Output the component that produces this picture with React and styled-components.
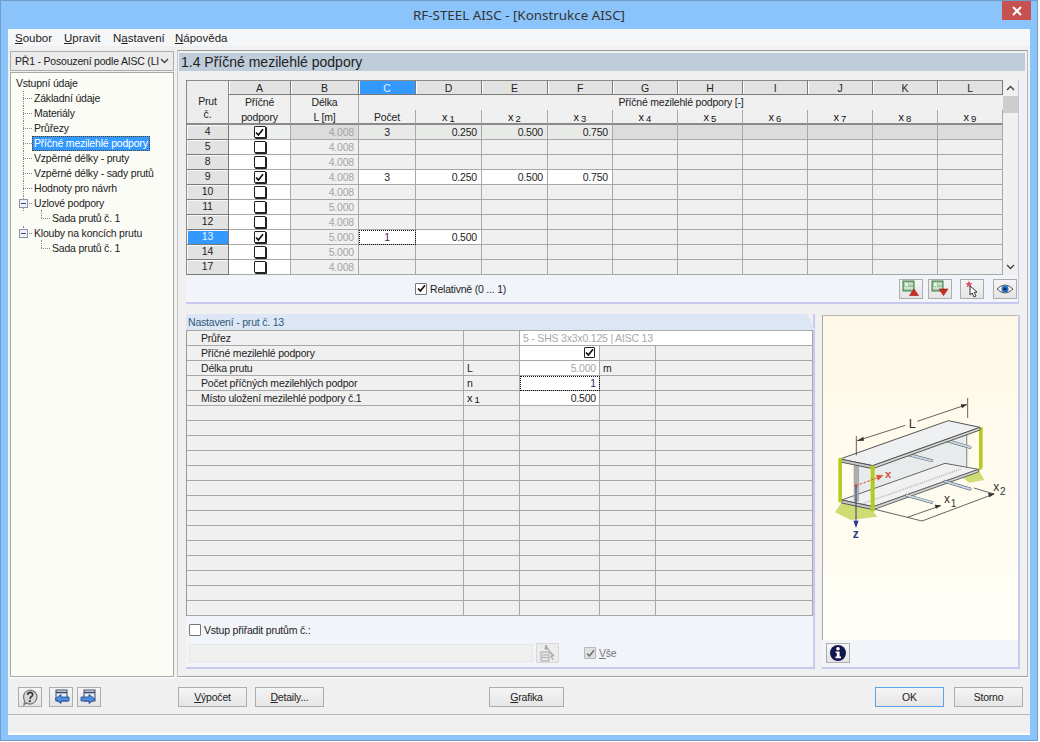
import React from "react";
import styled, { createGlobalStyle, css } from "styled-components";

const GlobalStyle = createGlobalStyle`
  html, body {
    margin: 0;
    background: #fff;
    overflow: hidden;
  }
  * { box-sizing: border-box; }
  body {
    font-family: "Liberation Sans", Arial, sans-serif;
    font-size: 10.5px;
    letter-spacing: -0.2px;
    color: #222;
  }
`;

const LINE = "#a8a8a8";
const BAND = "#f1f5fa";
const SELECT = "#3399ff";

const rows = [
  { no: 4, on: true, len: "4.008", vals: ["3", "0.250", "0.500", "0.750"], current: true },
  { no: 5, len: "4.008" },
  { no: 8, len: "4.008" },
  { no: 9, on: true, len: "4.008", vals: ["3", "0.250", "0.500", "0.750"] },
  { no: 10, len: "4.008" },
  { no: 11, len: "5.000" },
  { no: 12, len: "4.008" },
  { no: 13, on: true, len: "5.000", vals: ["1", "0.500"], active: true },
  { no: 14, len: "5.000" },
  { no: 17, len: "4.008" },
];

const letters = ["A", "B", "C", "D", "E", "F", "G", "H", "I", "J", "K", "L"];
const xCols = [1, 2, 3, 4, 5, 6, 7, 8, 9];

const tree = [
  { label: "Základní údaje" },
  { label: "Materiály" },
  { label: "Průřezy" },
  { label: "Příčné mezilehlé podpory", selected: true },
  { label: "Vzpěrné délky - pruty" },
  { label: "Vzpěrné délky - sady prutů" },
  { label: "Hodnoty pro návrh" },
  { label: "Uzlové podpory", open: true },
  { label: "Sada prutů č. 1", sub: true },
  { label: "Klouby na koncích prutu", open: true },
  { label: "Sada prutů č. 1", sub: true },
];

const Window = styled.div`
  position: relative;
  width: 1038px;
  height: 741px;
  display: flex;
  flex-direction: column;
  background: #8ac4fa;
  border: 1px solid #6f9cc8;
  padding: 0 7px 5px;
`;

const TitleBar = styled.div`
  height: 28px;
  flex: none;
  display: flex;
  align-items: center;
  justify-content: center;
  font-family: "Noto Sans", "Open Sans", sans-serif;
  font-size: 13.4px;
  letter-spacing: 0;
  color: #333;
`;

const CloseButton = styled.div`
  position: absolute;
  top: 0;
  right: 6px;
  width: 29px;
  height: 19px;
  background: #c75050;
  display: flex;
  align-items: center;
  justify-content: center;
`;

const Client = styled.div`
  flex: 1;
  min-height: 0;
  display: flex;
  flex-direction: column;
  background: #f0f0f0;
  border-bottom: 2px solid #fff;
`;

const MenuBar = styled.div`
  height: 17px;
  flex: none;
  display: flex;
  align-items: center;
  background: #f5f6f7;
  padding-left: 7px;
  font-size: 11.5px;
  letter-spacing: 0;
`;

const MenuItem = styled.span`
  width: ${(p) => p.$w}px;
  color: #222;
`;

const Body = styled.div`
  height: 631px;
  flex: none;
  display: flex;
  padding: 4px 2px 0;
  gap: 3px;
`;

const LeftColumn = styled.div`
  width: 164px;
  flex: none;
  display: flex;
  flex-direction: column;
  gap: 1px;
`;

const Combo = styled.div`
  height: 20px;
  margin-top: 1px;
  flex: none;
  display: flex;
  align-items: center;
  justify-content: space-between;
  padding: 0 4px;
  background: #ececec;
  border: 1px solid #acacac;
  white-space: nowrap;
  overflow: hidden;
`;

const Tree = styled.div`
  flex: 1;
  background: #fcfcf6;
  border: 1px solid #a8a8a8;
  padding-top: 3px;
`;

const TreeRow = styled.div`
  position: relative;
  height: 15px;
  line-height: 15px;
  padding-left: ${(p) => (p.$level === 0 ? 5 : p.$level === 1 ? 23 : 41)}px;
  white-space: nowrap;

  ${(p) =>
    p.$level > 0 &&
    css`
      &::before {
        content: "";
        position: absolute;
        left: ${p.$level === 1 ? 12 : 30}px;
        top: 7px;
        width: 9px;
        border-top: 1px dotted #888;
      }
      &::after {
        content: "";
        position: absolute;
        left: ${p.$level === 1 ? 12 : 30}px;
        top: ${p.$level === 1 ? 0 : -1}px;
        height: ${p.$last ? 8 : 15}px;
        border-left: 1px dotted #888;
      }
    `}
`;

const TreeLabel = styled.span`
  display: inline-block;
  height: 15px;
  line-height: 13px;
  padding: 0 1px;
  border: 1px solid transparent;
  margin-left: -2px;
  ${(p) =>
    p.$selected &&
    css`
      background: ${SELECT};
      color: #fff;
      border: 1px dotted #5a3a1a;
    `}
`;

const Expander = styled.span`
  position: absolute;
  z-index: 1;
  left: 8px;
  top: 3px;
  width: 9px;
  height: 9px;
  background: #eef1f8;
  border: 1px solid #8a94a8;
  &::after {
    content: "";
    position: absolute;
    left: 1px;
    right: 1px;
    top: 3px;
    border-top: 1px solid #3a4a7a;
  }
`;

const RightColumn = styled.div`
  flex: 1;
  min-width: 0;
  display: flex;
  flex-direction: column;
  border-top: 1px solid #9c9c9c;
  border-left: 1px solid #c8c8c8;
  border-right: 1px solid #b8b8b8;
  border-bottom: 1px solid #9c9c9c;
  padding: 2px 2px 0 1px;
`;

const Heading = styled.div`
  height: 18px;
  flex: none;
  line-height: 19px;
  padding-left: 2px;
  background: #bfccd9;
  font-size: 14px;
  letter-spacing: 0;
  color: #222;
`;

const TopBlock = styled.div`
  margin: 9px 0 0 7px;
  width: 833px;
  flex: none;
`;

const TableWrap = styled.div`
  display: flex;
  border-right: 1px solid #c4c4ee;
`;

const Grid = styled.div`
  width: 817px;
  flex: none;
  display: grid;
  grid-template-columns: 42px 62px 68px 57px 66px 66px 65px 65px 65px 65px 65px 65px 65px;
  grid-auto-rows: 15px;
  border-left: 1px solid #8a8a8a;
`;

const Cell = styled.div`
  min-width: 0;
  height: 15px;
  line-height: 14px;
  text-align: ${(p) => p.$align || "center"};
  padding: ${(p) => (p.$align === "right" ? "0 4px 0 0" : "0")};
  background: ${(p) => p.$bg || "#f0f0f0"};
  color: ${(p) => p.$color || "#222"};
  border-right: 1px solid ${LINE};
  border-bottom: 1px solid ${LINE};
  white-space: nowrap;
  ${(p) =>
    p.$focus &&
    css`
      outline: 1px dotted #111;
      outline-offset: -1px;
      color: #502060;
    `}
`;

const CornerHead = styled.div`
  grid-row: span 3;
  background: #ececec;
  border-right: 1px solid #8a8a8a;
  border-top: 1px solid #8a8a8a;
  border-bottom: 2px solid #8a8a8a;
  text-align: center;
  line-height: 13px;
  padding-top: 14px;
`;

const LetterCell = styled.div`
  height: 15px;
  line-height: 14px;
  text-align: center;
  background: ${(p) => (p.$on ? SELECT : "#e2e2e2")};
  color: ${(p) => (p.$on ? "#e8f2ff" : "#222")};
  border-top: 1px solid #8a8a8a;
  border-right: 1px solid #7a7a7a;
  border-bottom: 1px solid #7a7a7a;
  box-shadow: inset 1px 0 0 #fff;
`;

const SubHead = styled.div`
  height: 15px;
  line-height: 14px;
  text-align: center;
  background: #f0f0f0;
  border-right: ${(p) => (p.$line ? `1px solid ${LINE}` : "none")};
  border-bottom: ${(p) => (p.$base ? "2px solid #8a8a8a" : "none")};
  white-space: nowrap;
  grid-column: ${(p) => p.$span || "auto"};
`;

const RowHead = styled.div`
  height: 15px;
  line-height: 13px;
  text-align: center;
  background: ${(p) => (p.$on ? SELECT : "#e2e2e2")};
  color: ${(p) => (p.$on ? "#e8f2ff" : "#222")};
  border-right: 1px solid #7a7a7a;
  border-bottom: 1px solid #7a7a7a;
  box-shadow: inset 1px 1px 0 #f8f8f8;
`;

const Sub = styled.span`
  font-size: 9.5px;
  margin-left: 2px;
  vertical-align: -1px;
`;

const XLabel = styled.span`
  font-size: 11px;
  letter-spacing: 0;
  color: #111;
`;

const ScrollBar = styled.div`
  width: 15px;
  flex: none;
  display: flex;
  flex-direction: column;
  align-items: center;
  background: #f0f0f0;
`;

const ScrollButton = styled.div`
  height: 16px;
  width: 100%;
  display: flex;
  align-items: center;
  justify-content: center;
`;

const ScrollTrack = styled.div`
  flex: 1;
  width: 100%;
`;

const ScrollThumb = styled.div`
  height: 17px;
  width: 100%;
  background: #cdcdcd;
`;

const TableBar = styled.div`
  height: 29px;
  display: flex;
  align-items: center;
  padding: 0 1px 0 229px;
  background: ${BAND};
  border-right: 1px solid #c4c4ee;
  border-bottom: 2px solid #c8c8f0;
`;

const InlineCheckLabel = styled.label`
  display: flex;
  align-items: center;
  gap: 3px;
  color: ${(p) => p.$color || "#222"};
`;

const BarButtons = styled.div`
  margin-left: auto;
  display: flex;
`;

const IconButton = styled.div`
  width: 24px;
  height: 20px;
  display: flex;
  align-items: center;
  justify-content: center;
  background: linear-gradient(#f6f6f6, #e4e4e4);
  border: 1px solid #adadad;
  margin-left: ${(p) => p.$gap || 0}px;
  flex: none;
`;

const LowerRow = styled.div`
  flex: none;
  display: flex;
  gap: 7px;
  margin: 10px 0 0 7px;
  height: 355px;
`;

const SettingsPanel = styled.div`
  width: 629px;
  flex: none;
  display: flex;
  flex-direction: column;
  border-right: 2px solid #c8c8f0;
  border-bottom: 2px solid #c8c8f0;
`;

const PanelTitle = styled.div`
  height: 16px;
  flex: none;
  line-height: 16px;
  padding-left: 2px;
  margin-right: -2px;
  background: #dce6f5;
  color: #2f5a7a;
  clip-path: polygon(0 0, calc(100% - 8px) 0, 100% 100%, 0 100%);
`;

const SettingsGrid = styled.div`
  display: grid;
  grid-template-columns: 277px 56px 80px 56px 157px;
  grid-auto-rows: 15px;
  border-left: 1px solid #9a9a9a;
  border-top: 1px solid ${LINE};
  flex: none;
`;

const SetCell = styled.div`
  height: 15px;
  line-height: 14px;
  background: ${(p) => (p.$white ? "#fff" : "#f0f0f0")};
  color: ${(p) => p.$color || "#222"};
  border-right: 1px solid ${LINE};
  border-bottom: 1px solid ${LINE};
  padding: ${(p) => p.$pad || "0 3px"};
  text-align: ${(p) => p.$align || "left"};
  white-space: nowrap;
  grid-column: ${(p) => p.$span || "auto"};
  ${(p) =>
    p.$focus &&
    css`
      outline: 1px dotted #111;
      outline-offset: -1px;
      color: #502060;
    `}
`;

const AssignBlock = styled.div`
  flex: 1;
  background: ${BAND};
  padding: 8px 0 0 3px;
  display: flex;
  flex-direction: column;
`;

const AssignRow = styled.div`
  display: flex;
  align-items: center;
  margin-top: ${(p) => p.$top || 0}px;
`;

const DisabledInput = styled.div`
  width: 344px;
  height: 18px;
  background: #f0f0f0;
  border: 1px solid #e4e6e8;
`;

const PickButton = styled.div`
  width: 23px;
  height: 20px;
  margin-left: 3px;
  display: flex;
  align-items: center;
  justify-content: center;
  background: #ececec;
  border: 1px solid #d8d8d8;
`;

const AllCheck = styled.div`
  margin-left: 25px;
`;

const PicturePanel = styled.div`
  width: 198px;
  flex: none;
  display: flex;
  flex-direction: column;
  border-right: 2px solid #c8c8f0;
  border-bottom: 2px solid #c8c8f0;
  margin-top: 1px;
`;

const PictureArea = styled.div`
  flex: 1;
  padding: 78px 0 0 7px;
  background: linear-gradient(#fff8e6, #fffbee 50%, #fffff8);
  border-left: 1px solid #a8a8a8;
  border-top: 1px solid #b8b8b8;
`;

const PictureBar = styled.div`
  height: 27px;
  flex: none;
  padding: 3px 0 0 4px;
  background: ${BAND};
`;

const Footer = styled.div`
  height: 38px;
  flex: none;
  display: flex;
  align-items: center;
  padding: 2px 8px 0 10px;
  border-top: 1px solid #fff;
  border-bottom: 1px solid #b8b8b8;
`;

const FooterIcons = styled.div`
  display: flex;
  width: 160px;
  flex: none;
`;

const PushButton = styled.div`
  width: ${(p) => p.$w}px;
  height: 20px;
  flex: none;
  margin-left: ${(p) => p.$gap || 0}px;
  display: flex;
  align-items: center;
  justify-content: center;
  background: linear-gradient(#f4f4f4, #e6e6e6);
  border: 1px solid ${(p) => (p.$primary ? "#5aa5ee" : "#adadad")};
  color: #222;
`;

const StatusBar = styled.div`
  flex: 1;
  background: #f0f0f0;
`;

const CheckBox = styled.span`
  width: ${(p) => p.$size || 12}px;
  height: ${(p) => p.$size || 12}px;
  flex: none;
  display: inline-flex;
  align-items: center;
  justify-content: center;
  background: ${(p) => (p.$disabled ? "#e0e0e0" : "#fff")};
  border: 1px solid ${(p) => (p.$disabled ? "#b8b8b8" : p.$light ? "#777" : "#222")};
  box-shadow: ${(p) => (p.$flat ? "none" : "1px 1px 0 #222")};
  margin-top: ${(p) => (p.$flat ? 0 : 1)}px;
  border-radius: 1px;
`;

const Check = ({ on, flat, disabled, light, size }) => (
  <CheckBox $flat={flat} $disabled={disabled} $light={light} $size={size}>
    {on && (
      <svg width="9" height="9" viewBox="0 0 9 9">
        <path d="M1 4.5 L3.4 7 L8 1.2" fill="none" stroke={disabled ? "#777" : "#111"} strokeWidth="1.7" />
      </svg>
    )}
  </CheckBox>
);

const Chevron = ({ up }) => (
  <svg width="9" height="6" viewBox="0 0 9 6">
    <path d={up ? "M1 5 L4.5 1.5 L8 5" : "M1 1 L4.5 4.5 L8 1"} fill="none" stroke="#444" strokeWidth="1.4" />
  </svg>
);

const SheetIcon = ({ children }) => (
  <svg width="20" height="17" viewBox="0 0 20 17">
    <rect x="2" y="1" width="11" height="10" fill="#9fc79f" stroke="#3d7a45" />
    <path d="M4 3 L7 6 M7 3 L4 6 M8 4 H12 M3 8 H12" stroke="#fff" strokeWidth="1.1" />
    {children}
  </svg>
);

const ExportIcon = () => (
  <SheetIcon>
    <path d="M13 9 L17.5 15.5 H8.5 Z" fill="#d42b20" stroke="#8e1a14" strokeWidth="0.6" />
  </SheetIcon>
);

const ImportIcon = () => (
  <SheetIcon>
    <path d="M9 9 H18 L13.5 15.5 Z" fill="#d42b20" stroke="#8e1a14" strokeWidth="0.6" />
  </SheetIcon>
);

const PointerIcon = () => (
  <svg width="18" height="18" viewBox="0 0 18 18">
    <path d="M6 0.5 L7 3 L9.5 3 L7.6 4.8 L8.4 7.5 L6 6 L3.6 7.5 L4.4 4.8 L2.5 3 L5 3 Z" fill="#d9506a" />
    <path d="M7 6 L7 15 L9.2 13 L11 17 L13 16 L11.2 12.4 L14 12 Z" fill="#fff" stroke="#333" />
  </svg>
);

const EyeIcon = () => (
  <svg width="18" height="12" viewBox="0 0 18 12">
    <path d="M1 6 Q9 -2 17 6 Q9 14 1 6 Z" fill="#fff" stroke="#555" />
    <circle cx="9" cy="6" r="3.6" fill="#2472c8" />
    <circle cx="9" cy="6" r="1.6" fill="#0b2a5a" />
  </svg>
);

const HelpIcon = () => (
  <svg width="18" height="17" viewBox="0 0 18 17">
    <path d="M9 1 A7 7 0 1 1 5 13.8 L3 16 L3.6 11.6 A7 7 0 0 1 9 1 Z" fill="#d8d8d8" stroke="#777" strokeWidth="1.2" />
    <path d="M6.6 6 Q6.8 3.4 9.2 3.4 Q12 3.6 11.6 6 Q11.2 7.4 9.6 8.2 L9 10" fill="none" stroke="#334" strokeWidth="1.6" />
    <circle cx="8.8" cy="12.2" r="1.1" fill="#334" />
  </svg>
);

const PageArrowIcon = ({ right }) => (
  <svg width="18" height="17" viewBox="0 0 18 17">
    <rect x="4" y="1" width="11" height="11" fill="#e8ecf4" stroke="#3a4a6a" />
    <path d="M4 3.5 H15" stroke="#3a4a6a" strokeWidth="1.6" />
    {right ? (
      <path d="M1 8 H9 V5.5 L15 10 L9 14.5 V12 H1 Z" fill="#4c8fe0" stroke="#1e3f8a" strokeWidth="0.8" />
    ) : (
      <path d="M17 8 H9 V5.5 L3 10 L9 14.5 V12 H17 Z" fill="#4c8fe0" stroke="#1e3f8a" strokeWidth="0.8" />
    )}
  </svg>
);

const PickIcon = () => (
  <svg width="18" height="18" viewBox="0 0 18 18">
    <rect x="2" y="8" width="8" height="9" fill="#e6e6e6" stroke="#a8a8a8" />
    <path d="M3 11 H9 M3 13.5 H9" stroke="#b0b0b0" />
    <path d="M7 1 L9 5 L6 5 Z M9 5 L15 12 L12 12 L14 16" fill="#c8c8c8" stroke="#9a9a9a" />
  </svg>
);

const InfoIcon = () => (
  <svg width="18" height="18" viewBox="0 0 18 18">
    <circle cx="9" cy="9" r="8" fill="#10164e" />
    <circle cx="9" cy="4.8" r="1.8" fill="#fff" />
    <path d="M6.6 7.4 H10.6 V12.6 H12 V14.2 H6.4 V12.6 H7.8 V9 H6.6 Z" fill="#fff" />
  </svg>
);

const BeamPicture = () => (
  <svg width="180" height="150" viewBox="0 0 540 450" style={{ display: "block" }}>
    <path d="M15 355 L35 325 L125 345 L142 368 L62 378 Z" fill="#cfdc74" />
    <path d="M392 246 L445 226 L463 258 L418 266 Z" fill="#cfdc74" />
    <path d="M75 218 L415 108 L415 222 L82 332 Z" fill="#e8ebec" />
    <path d="M447 100 H458 V222 L447 232 Z" fill="#b4cc1e" />
    <path d="M410 108 V222" stroke="#8c8c8c" strokeWidth="3" />
    <path d="M345 138 L420 160" stroke="#555" strokeWidth="9" strokeLinecap="round" />
    <path d="M345 138 L420 160" stroke="#c5d6e8" strokeWidth="6" strokeLinecap="round" />
    <path d="M35 318 L345 208 L445 226 L130 338 Z" fill="#f0f1f0" stroke="#666" strokeWidth="3" />
    <path d="M130 338 L445 226 V234 L130 347 Z" fill="#d0d2d2" stroke="#666" strokeWidth="3" />
    <path d="M95 330 L395 224" stroke="#bbb" strokeWidth="5" strokeDasharray="3 3" />
    <path d="M35 318 L130 338 V347 L35 327 Z" fill="#c8caca" stroke="#555" strokeWidth="3" />
    <path d="M72 215 H86 V322 H72 Z" fill="#aeb0b0" stroke="#777" strokeWidth="1" />
    <path d="M228 180 L305 200" stroke="#555" strokeWidth="9" strokeLinecap="round" />
    <path d="M228 180 L305 200" stroke="#c5d6e8" strokeWidth="6" strokeLinecap="round" />
    <path d="M345 262 L420 285" stroke="#555" strokeWidth="9" strokeLinecap="round" />
    <path d="M345 262 L420 285" stroke="#c5d6e8" strokeWidth="6" strokeLinecap="round" />
    <path d="M230 304 L305 325" stroke="#555" strokeWidth="9" strokeLinecap="round" />
    <path d="M230 304 L305 325" stroke="#c5d6e8" strokeWidth="6" strokeLinecap="round" />
    <path d="M30 195 L355 80 L450 100 L128 215 Z" fill="#eef0f1" stroke="#555" strokeWidth="3" />
    <path d="M30 195 L128 215 V224 L32 204 Z" fill="#c8caca" stroke="#555" strokeWidth="3" />
    <path d="M128 215 L450 100 V108 L128 224 Z" fill="#d4d6d6" stroke="#555" strokeWidth="3" />
    <path d="M25 192 H36 V325 H25 Z" fill="#b4cc1e" />
    <path d="M122 215 H134 V352 H122 Z" fill="#b4cc1e" />
    <path d="M78 275 L140 252" stroke="#d8533c" strokeWidth="3" strokeDasharray="8 4" />
    <path d="M160 244 L138 243 L144 260 Z" fill="#d8533c" />
    <circle cx="78" cy="275" r="4" fill="#d8533c" />
    <text x="165" y="252" fontFamily="Liberation Sans, sans-serif" fontSize="34" fontWeight="700" fill="#d8533c">x</text>
    <path d="M78 275 V384" stroke="#2c3a8c" strokeWidth="3" />
    <path d="M78 402 L70 380 H86 Z" fill="#2c3a8c" />
    <text x="68" y="432" fontFamily="Liberation Sans, sans-serif" fontSize="36" fontWeight="700" fill="#2c3a8c">z</text>
    <path d="M79 126 V184 M413 12 V72" stroke="#444" strokeWidth="2.5" />
    <path d="M82 140 L226 94 M262 82 L410 32" stroke="#444" strokeWidth="2.5" />
    <path d="M80 141 L100 128 L102 140 Z M412 31 L392 31 L396 43 Z" fill="#333" />
    <text x="236" y="102" fontFamily="Liberation Sans, sans-serif" fontSize="38" fill="#333">L</text>
    <path d="M135 346 L232 370 L332 335 M232 370 L276 381 L492 300 M432 282 L492 300" stroke="#444" strokeWidth="2.5" fill="none" />
    <path d="M334 334 L314 332 L318 344 Z M494 299 L474 297 L478 310 Z" fill="#333" />
    <text x="342" y="328" fontFamily="Liberation Sans, sans-serif" fontSize="36" fill="#333">x</text>
    <text x="362" y="338" fontFamily="Liberation Sans, sans-serif" fontSize="30" fill="#333">1</text>
    <text x="490" y="292" fontFamily="Liberation Sans, sans-serif" fontSize="36" fill="#333">x</text>
    <text x="510" y="302" fontFamily="Liberation Sans, sans-serif" fontSize="30" fill="#333">2</text>
  </svg>
);

const MainTable = () => (
  <Grid>
    <CornerHead>
      Prut
      <br />
      č.
    </CornerHead>
    {letters.map((l) => (
      <LetterCell key={l} $on={l === "C"}>
        {l}
      </LetterCell>
    ))}
    <SubHead $line>Příčné</SubHead>
    <SubHead $line>Délka</SubHead>
    <SubHead $span="span 10">Příčné mezilehlé podpory [-]</SubHead>
    <SubHead $line $base>podpory</SubHead>
    <SubHead $line $base>L [m]</SubHead>
    <SubHead $line $base>Počet</SubHead>
    {xCols.map((n) => (
      <SubHead key={n} $line $base>
        <XLabel>
          x<Sub>{n}</Sub>
        </XLabel>
      </SubHead>
    ))}
    {rows.map((r) => {
      const empty = r.current ? "#dcdcdc" : "#f0f0f0";
      return (
        <React.Fragment key={r.no}>
          <RowHead $on={r.active}>{r.no}</RowHead>
          <Cell $bg={r.current ? "#edefee" : "#fff"}>
            <Check on={r.on} />
          </Cell>
          <Cell $align="right" $color="#a4a4a4" $bg={r.current ? "#dcdcdc" : "#f0f0f0"}>
            {r.len}
          </Cell>
          {xCols.concat(0).map((_, i) => {
            const v = r.vals && r.vals[i];
            const filled = v !== undefined;
            return (
              <Cell
                key={i}
                $align={i === 0 ? "center" : "right"}
                $focus={r.active && i === 0}
                $bg={filled ? (r.current ? "#e8eae8" : "#fff") : empty}
              >
                {v}
              </Cell>
            );
          })}
        </React.Fragment>
      );
    })}
  </Grid>
);

const SettingsTable = () => (
  <SettingsGrid>
    <SetCell $pad="0 0 0 14px">Průřez</SetCell>
    <SetCell />
    <SetCell $white $span="span 3" $color="#a8a8a8">
      5 - SHS 3x3x0.125 | AISC 13
    </SetCell>

    <SetCell $pad="0 0 0 14px">Příčné mezilehlé podpory</SetCell>
    <SetCell />
    <SetCell $white $align="right" $pad="0 4px 0 0">
      <Check on flat size={11} />
    </SetCell>
    <SetCell />
    <SetCell />

    <SetCell $pad="0 0 0 14px">Délka prutu</SetCell>
    <SetCell>L</SetCell>
    <SetCell $white $align="right" $color="#a8a8a8">5.000</SetCell>
    <SetCell>m</SetCell>
    <SetCell />

    <SetCell $pad="0 0 0 14px">Počet příčných mezilehlých podpor</SetCell>
    <SetCell>n</SetCell>
    <SetCell $white $align="right" $focus>1</SetCell>
    <SetCell />
    <SetCell />

    <SetCell $pad="0 0 0 14px">Místo uložení mezilehlé podpory č.1</SetCell>
    <SetCell>
      <XLabel>
        x<Sub>1</Sub>
      </XLabel>
    </SetCell>
    <SetCell $white $align="right">0.500</SetCell>
    <SetCell />
    <SetCell />

    {Array.from({ length: 14 * 5 }, (_, i) => (
      <SetCell key={i} />
    ))}
  </SettingsGrid>
);

export default function App() {
  return (
    <>
      <GlobalStyle />
      <Window>
        <TitleBar>RF-STEEL AISC - [Konstrukce AISC]</TitleBar>
        <CloseButton>
          <svg width="10" height="10" viewBox="0 0 10 10">
            <path d="M1 1 L9 9 M9 1 L1 9" stroke="#fff" strokeWidth="2" />
          </svg>
        </CloseButton>
        <Client>
          <MenuBar>
            <MenuItem $w={49}><u>S</u>oubor</MenuItem>
            <MenuItem $w={49}><u>U</u>pravit</MenuItem>
            <MenuItem $w={62}>N<u>a</u>stavení</MenuItem>
            <MenuItem $w={60}><u>N</u>ápověda</MenuItem>
          </MenuBar>
          <Body>
            <LeftColumn>
              <Combo>
                <span>PŘ1 - Posouzení podle AISC (LI</span>
                <Chevron />
              </Combo>
              <Tree>
                <TreeRow $level={0}>Vstupní údaje</TreeRow>
                {tree.map((t, i) => {
                  const next = tree[i + 1];
                  const last = t.sub ? !next || !next.sub : i === tree.length - 2;
                  return (
                    <TreeRow key={i} $level={t.sub ? 2 : 1} $last={last}>
                      {t.open && <Expander />}
                      <TreeLabel $selected={t.selected}>{t.label}</TreeLabel>
                    </TreeRow>
                  );
                })}
              </Tree>
            </LeftColumn>
            <RightColumn>
              <Heading>1.4 Příčné mezilehlé podpory</Heading>
              <TopBlock>
                <TableWrap>
                  <MainTable />
                  <ScrollBar>
                    <ScrollButton><Chevron up /></ScrollButton>
                    <ScrollThumb />
                    <ScrollTrack />
                    <ScrollButton><Chevron /></ScrollButton>
                  </ScrollBar>
                </TableWrap>
                <TableBar>
                  <InlineCheckLabel>
                    <Check on flat light />
                    Relativně (0 ... 1)
                  </InlineCheckLabel>
                  <BarButtons>
                    <IconButton><ExportIcon /></IconButton>
                    <IconButton $gap={5}><ImportIcon /></IconButton>
                    <IconButton $gap={8}><PointerIcon /></IconButton>
                    <IconButton $gap={9}><EyeIcon /></IconButton>
                  </BarButtons>
                </TableBar>
              </TopBlock>
              <LowerRow>
                <SettingsPanel>
                  <PanelTitle>Nastavení - prut č. 13</PanelTitle>
                  <SettingsTable />
                  <AssignBlock>
                    <InlineCheckLabel>
                      <Check flat light />
                      Vstup přiřadit prutům č.:
                    </InlineCheckLabel>
                    <AssignRow $top={7}>
                      <DisabledInput />
                      <PickButton><PickIcon /></PickButton>
                      <AllCheck>
                        <InlineCheckLabel $color="#777">
                          <Check on flat disabled />
                          <span><u>V</u>še</span>
                        </InlineCheckLabel>
                      </AllCheck>
                    </AssignRow>
                  </AssignBlock>
                </SettingsPanel>
                <PicturePanel>
                  <PictureArea>
                    <BeamPicture />
                  </PictureArea>
                  <PictureBar>
                    <IconButton><InfoIcon /></IconButton>
                  </PictureBar>
                </PicturePanel>
              </LowerRow>
            </RightColumn>
          </Body>
          <Footer>
            <FooterIcons>
              <IconButton><HelpIcon /></IconButton>
              <IconButton $gap={7}><PageArrowIcon /></IconButton>
              <IconButton $gap={4}><PageArrowIcon right /></IconButton>
            </FooterIcons>
            <PushButton $w={69}><span><u>V</u>ýpočet</span></PushButton>
            <PushButton $w={69} $gap={8}><span><u>D</u>etaily...</span></PushButton>
            <PushButton $w={75} $gap={165}><span><u>G</u>rafika</span></PushButton>
            <PushButton $w={69} $gap={311} $primary>OK</PushButton>
            <PushButton $w={69} $gap={10}>Storno</PushButton>
          </Footer>
          <StatusBar />
        </Client>
      </Window>
    </>
  );
}
